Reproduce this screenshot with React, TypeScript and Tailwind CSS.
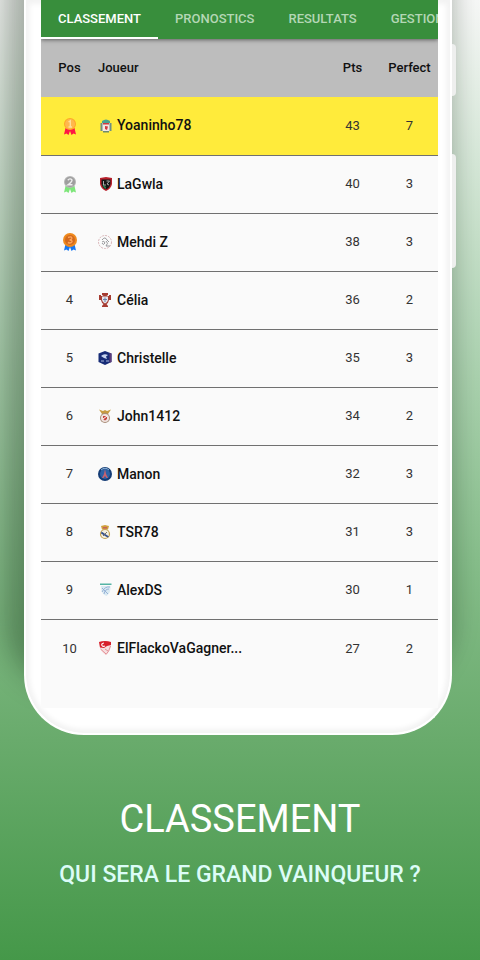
import type { ReactNode } from "react";

type Player = { pos: number; name: string; pts: number; perfect: number; crest: ReactNode };

const crestClass = "h-4 w-4 shrink-0";

function Medal({ rank }: { rank: number }) {
  const styles = [
    { disc: "#ffb74d", ring: "#ffa726", digit: "#ffdd9a", ribbon: "#ff1744" },
    { disc: "#9e9e9e", ring: "#b5b5b5", digit: "#eeeeee", ribbon: "#7ee67a" },
    { disc: "#d2691e", ring: "#ef8a1d", digit: "#ffa55a", ribbon: "#1677f2" },
  ];
  const s = styles[rank - 1];
  return (
    <svg viewBox="0 0 16 20" className="mx-auto h-5 w-4" role="img" aria-label={`${rank}`}>
      <path d="M3.500 12 L2 18.500 L4.500 17.500 L6.500 19 L8 15 L9.500 19 L11.500 17.500 L14 18.500 L12.500 12 Z" fill={s.ribbon} />
      <circle cx="8" cy="8" r={rank === 3 ? 7 : 6} fill={s.ring} />
      <circle cx="8" cy="8" r="5" fill={s.disc} />
      {rank === 1 && <path d="M6.500 6 L8.300 4.800 V11 M6.500 11 H10" stroke={s.digit} strokeWidth="1.400" fill="none" />}
      {rank === 2 && <path d="M5.800 6.300 Q8 3.700 10 6 Q10 8 6 10.800 H10.500" stroke={s.digit} strokeWidth="1.400" fill="none" />}
      {rank === 3 && <path d="M6 5.500 Q10 4 9.800 6.400 Q9.500 8 7.500 8 Q10.300 8 10 9.800 Q9 11.800 5.800 10.500" stroke={s.digit} strokeWidth="1.400" fill="none" />}
    </svg>
  );
}

const players: Player[] = [
  {
    pos: 1, name: "Yoaninho78", pts: 43, perfect: 7,
    crest: (
      <svg viewBox="0 0 16 16" className={crestClass} aria-hidden="true">
        <path d="M4 3 Q8 0 12 3 V5 H4 Z" fill="#4aa391" />
        <path d="M3 5 H13 V12 Q8 16 3 12 Z" fill="#f4e9e4" />
        <path d="M2.500 5 H4.500 V13 H2.500 Z M11.500 5 H13.500 V13 H11.500 Z" fill="#6f8f83" />
        <path d="M5 5 H11 V6.500 H5 Z M7 8 L10 8.500 L9 12 L7 11 Z" fill="#d33a3f" />
        <path d="M5 13 H11 V14.500 H5 Z" fill="#6d8a6d" />
      </svg>
    ),
  },
  {
    pos: 2, name: "LaGwla", pts: 40, perfect: 3,
    crest: (
      <svg viewBox="0 0 16 16" className={crestClass} aria-hidden="true">
        <path d="M2 2 L8 1 L14 2 V8 Q13 13 8 15 Q3 13 2 8 Z" fill="#b8202c" />
        <path d="M3.500 3.500 H12.500 V8 Q11.500 12 8 13.500 Q4.500 12 3.500 8 Z" fill="#151515" />
        <path d="M4.500 8 Q5 12 8 13 V11 Z" fill="#2f7a4c" />
        <path d="M5.500 5 V9 H8 M8.500 5 H11.500 L9 8 L11 9" stroke="#a9a9a9" strokeWidth="1" fill="none" />
      </svg>
    ),
  },
  {
    pos: 3, name: "Mehdi Z", pts: 38, perfect: 3,
    crest: (
      <svg viewBox="0 0 16 16" className={crestClass} aria-hidden="true">
        <circle cx="7" cy="8" r="6.500" fill="#fafafa" stroke="#d9b5b8" strokeWidth="1" strokeDasharray="2 1" />
        <path d="M4 6 Q7 2 9 6 L11 8 M4 8 Q6 6 7 9 Q5 12 4 9 M8 7 Q11 9 8 12 L12 12" stroke="#8d8d92" strokeWidth="0.900" fill="none" />
      </svg>
    ),
  },
  {
    pos: 4, name: "Célia", pts: 36, perfect: 2,
    crest: (
      <svg viewBox="0 0 16 16" className={crestClass} aria-hidden="true">
        <path d="M4 1 H10 V3 L8.500 4 H11 V3 H13 V8 H11 Q10.500 11 8.500 12 L10 14 V15 H4 V14 L5.500 12 Q3.500 11 3 8 H1 V3 H3 V4 H5.500 L4 3 Z" fill="#a63c32" />
        <path d="M4 4.500 H10 V8 Q9.500 10.500 7 11.500 Q4.500 10.500 4 8 Z" fill="#e4e6ec" />
        <path d="M6.500 5.500 H7.500 V10 H6.500 Z M5 7 H9 V8 H5 Z" fill="#6d83ad" />
      </svg>
    ),
  },
  {
    pos: 5, name: "Christelle", pts: 35, perfect: 3,
    crest: (
      <svg viewBox="0 0 16 16" className={crestClass} aria-hidden="true">
        <path d="M7 1 L13.500 3.500 V12 L7 15 L0.500 12 V3.500 Z" fill="#172c77" />
        <path d="M11.500 2.800 L13.500 3.500 V12 L11.500 12.800 Z" fill="#5d3b7a" />
        <path d="M3 6 Q6 3 10 5 L8 6.500 L9 9 L6 8 Z" fill="#c7d4ee" />
        <path d="M3 11 H6 M8 11 H11" stroke="#a9b7de" strokeWidth="1" />
      </svg>
    ),
  },
  {
    pos: 6, name: "John1412", pts: 34, perfect: 2,
    crest: (
      <svg viewBox="0 0 16 16" className={crestClass} aria-hidden="true">
        <path d="M1 1.500 L5 3 L7 2 L9 3 L13 1.500 L10 6 H4 Z" fill="#c79b42" />
        <circle cx="7" cy="10" r="5" fill="#a98d78" />
        <circle cx="7" cy="10" r="4" fill="#efe3df" />
        <path d="M5 8 H9 V11 L7 12.500 L5 11 Z" fill="#c5433d" />
        <path d="M5 11 L9 8" stroke="#ffffff" strokeWidth="1" />
      </svg>
    ),
  },
  {
    pos: 7, name: "Manon", pts: 32, perfect: 3,
    crest: (
      <svg viewBox="0 0 16 16" className={crestClass} aria-hidden="true">
        <circle cx="7" cy="8" r="7" fill="#143c75" />
        <circle cx="7" cy="8" r="5" fill="#2c62a5" />
        <path d="M7 3 L8 8 L10 12 H8.500 L7 10 L5.500 12 H4 L6 8 Z" fill="#c9626e" />
        <path d="M3 4 Q7 0.500 11 4" stroke="#8db4d8" strokeWidth="1" fill="none" />
      </svg>
    ),
  },
  {
    pos: 8, name: "TSR78", pts: 31, perfect: 3,
    crest: (
      <svg viewBox="0 0 16 16" className={crestClass} aria-hidden="true">
        <path d="M3 2 L7 1 L11 2 L10 5.500 H4 Z" fill="#d0a03d" />
        <path d="M5 3 H9 V4.500 H5 Z" fill="#c5625c" />
        <circle cx="7" cy="10" r="4.500" fill="#f5f0df" stroke="#c8a451" strokeWidth="1.200" />
        <path d="M3.500 7.500 L11 12.500 L9.500 13.500 L3 9.500 Z" fill="#34508d" />
        <path d="M5 12 L9 8" stroke="#70665a" strokeWidth="0.900" />
      </svg>
    ),
  },
  {
    pos: 9, name: "AlexDS", pts: 30, perfect: 1,
    crest: (
      <svg viewBox="0 0 16 16" className={crestClass} aria-hidden="true">
        <path d="M2 1.500 H13.500 V3 H2 Z" fill="#55b4a5" />
        <path d="M3 4 H12.500 Q13 11 8.500 14 Q3 12 3 4 Z" fill="#d9e9f2" />
        <path d="M4 10 Q7 4 12 5 M6 12 Q7 7 11 7 M4 6 L10 12" stroke="#8eacd3" strokeWidth="0.900" fill="none" />
      </svg>
    ),
  },
  {
    pos: 10, name: "ElFlackoVaGagner...", pts: 27, perfect: 2,
    crest: (
      <svg viewBox="0 0 16 16" className={crestClass} aria-hidden="true">
        <path d="M1 2 Q7 0 13 2 Q14 9 8 15 Q1 11 1 2 Z" fill="#f6dfe0" />
        <path d="M1 2 Q7 0 13 2 V5 L9 6 L6 8 L2 7.500 Z" fill="#d71f2b" />
        <path d="M6 3 Q3 3.500 4 5.500 Q5 7 7 6" stroke="#ffffff" strokeWidth="1.200" fill="none" />
        <path d="M2.500 9 L8 14 M7 9 L10 11 M12.500 6 Q11 12 8 14.500" stroke="#e2868c" strokeWidth="0.900" fill="none" />
      </svg>
    ),
  },
];

const tabs = ["CLASSEMENT", "PRONOSTICS", "RESULTATS", "GESTION"];

export default function App() {
  return (
    <main className="min-h-screen overflow-hidden bg-[linear-gradient(to_bottom,#f6f7f6_0px,#b4d6b8_320px,#86bd8a_560px,#69ab6c_740px,#459849_960px)] font-[Roboto,sans-serif]">
      <div className="relative ml-6 mr-7">
        <section className="rounded-b-[60px] border-x-2 border-b-2 border-white bg-white pb-[25px] pl-[15px] pr-3 shadow-[-12px_-55px_28px_10px_rgba(0,20,5,0.28),0px_-50px_24px_0px_rgba(0,50,10,0.08),inset_0_0_5px_4px_#f3f3f3]">
          <div className="overflow-hidden bg-[#fafafa] pb-[31px]">
            <nav className="relative flex h-[39px] bg-[#388e3c] shadow-[0_1px_4px_rgba(0,0,0,0.5)]">
              {tabs.map((tab, i) => (
                <button
                  key={tab}
                  type="button"
                  className={`shrink-0 border-b-2 px-[17px] text-[13px] font-medium ${i === 0 ? "border-white text-white" : "border-transparent text-[#b4d7b5]"}`}
                >
                  {tab}
                </button>
              ))}
            </nav>
            <table className="w-full table-fixed border-collapse text-[13px] text-[#333333]">
              <thead>
                <tr className="h-[58px] bg-[#bdbdbd] text-[#111111]">
                  <th className="w-[57px] p-0 font-medium">Pos</th>
                  <th className="p-0 text-left font-medium">Joueur</th>
                  <th className="w-[57px] p-0 font-medium">Pts</th>
                  <th className="w-[57px] p-0 font-medium">Perfect</th>
                </tr>
              </thead>
              <tbody>
                {players.map((p) => (
                  <tr key={p.pos} className="h-[58px] border-b border-[#707070] text-center first:bg-[#ffeb3b] last:border-0">
                    <td className="p-0">{p.pos <= 3 ? <Medal rank={p.pos} /> : p.pos}</td>
                    <td className="p-0">
                      <div className="flex items-center gap-[3px] text-[14px] font-medium text-[#111111]">
                        {p.crest}
                        {p.name}
                      </div>
                    </td>
                    <td className="p-0">{p.pts}</td>
                    <td className="p-0">{p.perfect}</td>
                  </tr>
                ))}
              </tbody>
            </table>
          </div>
        </section>
        <span className="absolute left-full top-11 h-13 w-1 rounded-r-sm bg-[#eeefee]" />
        <span className="absolute left-full top-[154px] h-[114px] w-1 rounded-r-sm bg-[#eeefee]" />
      </div>
      <footer className="pt-[60px] text-center">
        <h1 className="text-[38px] leading-12 text-white">CLASSEMENT</h1>
        <p className="mt-4 text-[23px] font-medium leading-8 text-[#dcfcf7]">QUI SERA LE GRAND VAINQUEUR ?</p>
      </footer>
    </main>
  );
}
